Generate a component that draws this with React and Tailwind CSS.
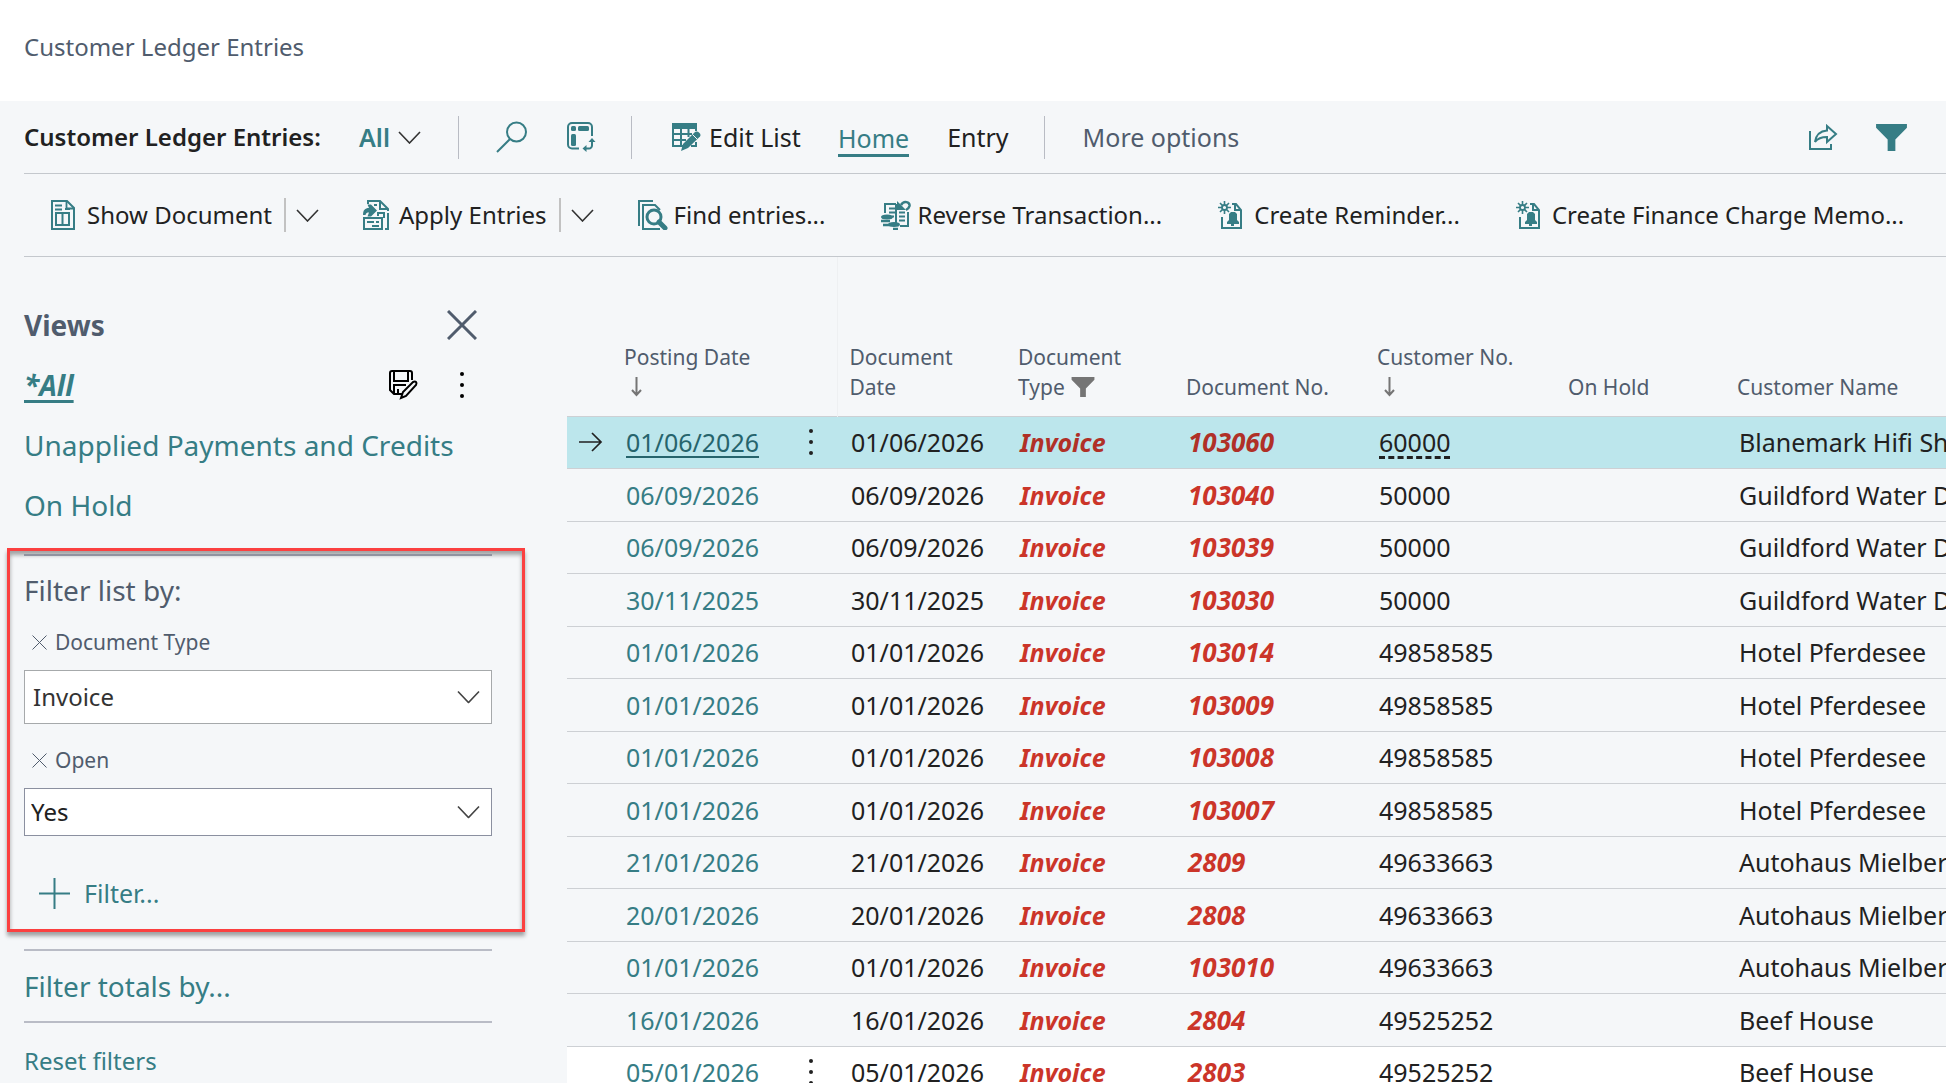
import React from "react";

function Svg({ w, h, vb, children, className = "" }) {
  return (
    <svg width={w} height={h} viewBox={vb || `0 0 ${w} ${h}`} fill="none" stroke="currentColor" strokeWidth="2" className={"shrink-0 " + className} aria-hidden="true">
      {children}
    </svg>
  );
}

const Chevron = ({ className = "" }) => (
  <Svg w={23} h={13} className={className}>
    <path d="M1 1l10.500 11L22 1" strokeWidth="1.600" />
  </Svg>
);

const SearchIcon = () => (
  <Svg w={32} h={32}>
    <circle cx="20.500" cy="11" r="9.500" />
    <path d="M14 18L1 31" />
  </Svg>
);

const AnalyzeIcon = () => (
  <Svg w={30} h={30}>
    <path d="M13 26.500H6a4 4 0 0 1-4-4V5a4 4 0 0 1 4-4h16a4 4 0 0 1 4 4v9" />
    <rect x="5" y="4" width="5" height="5" rx="1.500" fill="currentColor" stroke="none" />
    <rect x="12" y="4" width="11" height="5" rx="1.500" fill="currentColor" stroke="none" />
    <rect x="5" y="12" width="5" height="12" rx="1.500" fill="currentColor" stroke="none" />
    <path d="M26 18v5.500a3 3 0 0 1-3 3h-5" />
    <path d="M22.500 20l3.500-4 3.500 4zM20.500 23l-4 3.500 4 3.500z" fill="currentColor" stroke="none" />
  </Svg>
);

const EditListIcon = () => (
  <Svg w={29} h={28}>
    <path d="M1 1h23v4H1z" fill="currentColor" />
    <path d="M1 5v18h10M1 11h19M1 17h13M9 5v18M16.500 5v9M24 5v3M24 19v4h-5" />
    <path d="M9 28l2-7L23 9c2.500-2 7 2 5 4.500L16 25z" fill="currentColor" stroke="none" />
    <path d="M20.500 11.500l5 5" stroke="#f5f7f9" strokeWidth="1" />
  </Svg>
);

const ShareIcon = () => (
  <Svg w={30} h={27}>
    <path d="M2 7v18h21v-5" />
    <path d="M19 2l9 8-9 8v-5c-6 0-9 1-12 5 1-7 5-11 12-11.500z" />
  </Svg>
);

const Funnel = ({ w, h }) => (
  <Svg w={w} h={h} vb="0 0 32 28">
    <path d="M0 0h32v4L20 16v12h-8V16L0 4z" fill="currentColor" stroke="none" />
  </Svg>
);

const DocIcon = () => (
  <Svg w={25} h={30}>
    <path d="M1 1h15l7 7v21H1z" />
    <path d="M15.500 1v7.500H23M4 5.500h7M4 9.500h7M14 9h5" strokeWidth="1.800" />
    <path d="M5 13h13v12H5zM11.500 13v12" />
  </Svg>
);

const ApplyIcon = () => (
  <Svg w={27} h={30}>
    <path d="M5 4V1h12l8 8v2M17 1v8h8M11 5h3M25 13v16h-3" />
    <path d="M0 15c0-5 2-7 6-7L4.500 4.500H8l6 6-6 6H4.500L6 12.500c-2 0-3 .500-3.500 2.500z" fill="currentColor" stroke="none" />
    <path d="M15 16v-3h6v5M1 18h18v11H1zM4 22h7M13 22h3M9 26h7" />
  </Svg>
);

const FindIcon = () => (
  <Svg w={31} h={30}>
    <path d="M1 26V1h14" />
    <path d="M22 10l-5-5H5v24h17" />
    <circle cx="16" cy="17" r="7" strokeWidth="3" />
    <path d="M21 22l6 6" strokeWidth="5" strokeLinecap="round" />
  </Svg>
);

const ReverseIcon = () => (
  <Svg w={30} h={30}>
    <path d="M4 13V4h11M14 8.500H8M14 12.500H8M15 4v19M18 12.500h6M18 16.500h6M18 20.500h6M13 16.500h-2M27 12v14h-8" />
    <path d="M16 1v9h9z" fill="currentColor" stroke="none" />
    <path d="M20 5c3-5 9-3 8.500 1-.500 2-1.500 3-3.500 4" strokeWidth="2.500" />
    <ellipse cx="6" cy="17" rx="5" ry="1.500" fill="currentColor" />
    <path d="M0 21h9M2 25h6M12 29h5" strokeWidth="2.500" />
    <ellipse cx="13" cy="24.500" rx="5" ry="1.500" fill="currentColor" />
  </Svg>
);

const ReminderIcon = () => (
  <Svg w={25} h={29}>
    <path d="M6.500 0v13M0 6.500h13M2 2l9 9M11 2l-9 9" strokeWidth="1.600" />
    <circle cx="6.500" cy="6.500" r="2.500" fill="#f5f7f9" strokeWidth="1.800" />
    <path d="M14 3h4l5 6v18H4V16M17 3v6h6" />
    <path d="M13 11h4l2 2v6l2 2v2h-5v2h-3v-2H9v-2l2-2v-6z" fill="currentColor" stroke="none" />
  </Svg>
);

const SaveEditIcon = () => (
  <Svg w={30} h={30}>
    <path d="M13 24H5l-4-4V3q0-2 2-2h18q2 0 2 2v7" />
    <path d="M5 1v10h14V1M5 23v-8h12M9 24v-5" />
    <path d="M12 28l2-6 10-10q2-1 3 0t0 3L17 26z" />
  </Svg>
);

const Cross = ({ size, sw }) => (
  <Svg w={size} h={size} vb="0 0 30 30">
    <path d="M1 1l28 28M29 1L1 29" strokeWidth={sw} />
  </Svg>
);

const Dots = () => (
  <Svg w={6} h={28}>
    <g fill="currentColor" stroke="none">
      <circle cx="3" cy="3" r="2" />
      <circle cx="3" cy="14" r="2" />
      <circle cx="3" cy="25" r="2" />
    </g>
  </Svg>
);

const SortArrow = () => (
  <Svg w={13} h={20} className="text-[#757575]">
    <path d="M6.500 0v18M2 13l4.500 5 4.500-5" />
  </Svg>
);

const Divider = ({ className = "" }) => <span className={"w-px h-[43px] bg-[#b9bcc4] " + className} />;

function Action({ icon, label, split, className = "" }) {
  return (
    <div className={"flex items-center shrink-0 " + className}>
      <button className="flex items-center text-[#212121]">
        <span className="flex w-9 text-[#367d85]">{icon}</span>
        {label}
      </button>
      {split && (
        <>
          <span className="ml-3 h-[34px] w-0.5 bg-[#c2c2c2]" />
          <button aria-label={label + " options"} className="ml-2.5 text-[#333]">
            <Chevron />
          </button>
        </>
      )}
    </div>
  );
}

function FilterField({ id, label, options, className = "" }) {
  return (
    <div>
      <div className="flex h-9 items-center gap-2 pl-2 text-[21px] text-[#505c6d]">
        <button aria-label={"Remove " + label}>
          <Cross size={15} sw={2} />
        </button>
        <label htmlFor={id}>{label}</label>
      </div>
      <div className="relative mt-2.5">
        <select id={id} className={"block w-full appearance-none rounded-none border bg-white text-[24px] " + className}>
          {options.map((o) => (
            <option key={o}>{o}</option>
          ))}
        </select>
        <Chevron className="pointer-events-none absolute right-3 top-1/2 -translate-y-1/2 text-[#444]" />
      </div>
    </div>
  );
}

const rows = [
  ["01/06/2026", "103060", "60000", "Blanemark Hifi Shop"],
  ["06/09/2026", "103040", "50000", "Guildford Water Department"],
  ["06/09/2026", "103039", "50000", "Guildford Water Department"],
  ["30/11/2025", "103030", "50000", "Guildford Water Department"],
  ["01/01/2026", "103014", "49858585", "Hotel Pferdesee"],
  ["01/01/2026", "103009", "49858585", "Hotel Pferdesee"],
  ["01/01/2026", "103008", "49858585", "Hotel Pferdesee"],
  ["01/01/2026", "103007", "49858585", "Hotel Pferdesee"],
  ["21/01/2026", "2809", "49633663", "Autohaus Mielberg KG"],
  ["20/01/2026", "2808", "49633663", "Autohaus Mielberg KG"],
  ["01/01/2026", "103010", "49633663", "Autohaus Mielberg KG"],
  ["16/01/2026", "2804", "49525252", "Beef House"],
  ["05/01/2026", "2803", "49525252", "Beef House"],
];

function LedgerTable() {
  const th = "p-0 pb-3.5 pl-3 text-left align-bottom font-normal leading-[30px]";
  return (
    <table className="w-full table-fixed border-collapse whitespace-nowrap">
      <colgroup>
        <col className="w-[45px]" />
        <col className="w-[171px]" />
        <col className="w-[54px]" />
        <col className="w-[169px]" />
        <col className="w-[168px]" />
        <col className="w-[191px]" />
        <col className="w-[191px]" />
        <col className="w-[169px]" />
        <col />
      </colgroup>
      <thead>
        <tr className="h-[159px] border-b border-[#cdd0d4] text-[21px] text-[#505c6d]">
          <th className="p-0" aria-label="Selected" />
          <th className={th}>Posting Date<span className="flex h-[30px] items-center pl-1.5"><SortArrow /></span></th>
          <th className="border-r border-[#eef0f2] p-0" aria-label="Row menu" />
          <th className={th}>Document<br />Date</th>
          <th className={th}>Document<span className="flex items-center gap-1.5">Type <span className="text-[#757575]"><Funnel w={24} h={20} /></span></span></th>
          <th className={th}>Document No.</th>
          <th className={th}>Customer No.<span className="flex h-[30px] items-center pl-1.5"><SortArrow /></span></th>
          <th className={th}>On Hold</th>
          <th className={th}>Customer Name</th>
        </tr>
      </thead>
      <tbody>
        {rows.map(([date, doc, cust, name], i) => {
          const sel = i === 0;
          const last = i === rows.length - 1;
          return (
            <tr key={doc} className={"h-[52px] even:h-[53px] border-b border-[#cdd0d4] text-[25px] text-[#212121] " + (sel ? "bg-[#bce6ec]" : last ? "bg-white" : "")}>
              <td className="p-0 pl-3">
                {sel && (
                  <Svg w={24} h={20} className="text-[#212121]">
                    <path d="M0 10h22M13 1l9 9-9 9" strokeWidth="1.700" />
                  </Svg>
                )}
              </td>
              <td className="p-0 pl-3.5">
                <a href="#entry" className={sel ? "text-[#26646c] underline decoration-2 underline-offset-4" : "text-[#367d85]"}>{date}</a>
              </td>
              <td className="p-0">
                {(sel || last) && (
                  <button aria-label="More options for row" className="ml-[25px] flex"><Dots /></button>
                )}
              </td>
              <td className="p-0 pl-3.5">{date}</td>
              <td className={"p-0 pl-3.5 font-bold italic " + (sel ? "text-[#b03027]" : "text-[#cb3529]")}>Invoice</td>
              <td className={"p-0 pl-3.5 text-[26px] font-bold italic " + (sel ? "text-[#b03027]" : "text-[#cb3529]")}>{doc}</td>
              <td className="p-0 pl-3.5">
                <span className={sel ? "underline decoration-dashed decoration-[3px] underline-offset-4" : ""}>{cust}</span>
              </td>
              <td className="p-0" />
              <td className="overflow-hidden p-0 pl-3.5">{name}</td>
            </tr>
          );
        })}
      </tbody>
    </table>
  );
}

export default function App() {
  return (
    <div className="flex h-screen flex-col overflow-hidden bg-[#f5f7f9] font-['Noto_Sans',sans-serif] text-[25px] leading-9 text-[#212121]">
      <header className="flex h-[101px] shrink-0 items-center bg-white pb-2 pl-6 text-[24px] text-[#505c6d]">
        <h1>Customer Ledger Entries</h1>
      </header>

      <nav className="ml-6 flex h-[73px] shrink-0 items-center whitespace-nowrap border-b border-[#c4c8cd]">
        <h2 className="w-[335px] text-[24px] font-semibold">Customer Ledger Entries:</h2>
        <button className="flex w-[99px] items-center gap-2 font-semibold text-[#367d85]">
          All <Chevron className="text-[#333]" />
        </button>
        <Divider />
        <button aria-label="Search" className="ml-[37px] text-[#367d85]"><SearchIcon /></button>
        <button aria-label="Analyze" className="ml-[38px] text-[#367d85]"><AnalyzeIcon /></button>
        <Divider className="ml-[35px]" />
        <button className="ml-10 flex w-[166px] items-center gap-2">
          <span className="text-[#367d85]"><EditListIcon /></span>Edit List
        </button>
        <button className="mt-1 border-b-[3px] border-[#367d85] leading-8 text-[#367d85]">Home</button>
        <button className="ml-[38px]">Entry</button>
        <Divider className="ml-[35px]" />
        <button className="ml-[38px] text-[#505c6d]">More options</button>
        <button aria-label="Share" className="ml-auto text-[#367d85]"><ShareIcon /></button>
        <button aria-label="Filter pane" className="ml-[38px] mr-[39px] text-[#367d85]"><Funnel w={31} h={27} /></button>
      </nav>

      <div className="ml-6 flex h-[83px] shrink-0 items-center whitespace-nowrap border-b border-[#c4c8cd] pl-[27px] text-[24px]">
        <Action icon={<DocIcon />} label="Show Document" split />
        <Action icon={<ApplyIcon />} label="Apply Entries" split className="ml-11" />
        <Action icon={<FindIcon />} label="Find entries..." className="ml-11" />
        <Action icon={<ReverseIcon />} label="Reverse Transaction..." className="ml-14" />
        <Action icon={<ReminderIcon />} label="Create Reminder..." className="ml-14" />
        <Action icon={<ReminderIcon />} label="Create Finance Charge Memo..." className="ml-14" />
      </div>

      <div className="flex min-h-0 flex-1">
        <aside className="flex w-[567px] shrink-0 flex-col pl-6 pr-[75px] text-[28px] text-[#367d85]">
          <div className="mt-[38px] flex h-[60px] items-center justify-between text-[#505c6d]">
            <h2 className="font-bold">Views</h2>
            <button aria-label="Close" className="mr-[15px]"><Cross size={30} sw={3} /></button>
          </div>
          <div className="flex h-[60px] items-center">
            <a href="#all" className="font-bold italic underline decoration-[3px] underline-offset-4">*All</a>
            <button aria-label="Save view" className="ml-auto text-black"><SaveEditIcon /></button>
            <button aria-label="View options" className="ml-10 mr-[27px] text-black"><Dots /></button>
          </div>
          <a href="#unapplied" className="h-[60px] leading-[60px] whitespace-nowrap">Unapplied Payments and Credits</a>
          <a href="#onhold" className="h-[60px] leading-[60px]">On Hold</a>

          <section className="-ml-[17px] -mr-[33px] mt-[13px] h-[384px] border-[3px] border-[#fb4040] pl-3.5 pr-[30px] shadow-[0_4px_4px_rgba(0,0,0,0.35),inset_0_4px_4px_rgba(0,0,0,0.35)]">
            <hr className="mt-[3px] h-0.5 border-0 bg-[#9093a0]" />
            <h3 className="mt-4 text-[#505c6d]">Filter list by:</h3>
            <div className="mt-4"><FilterField id="doctype" label="Document Type" options={["Invoice", "Payment"]} className="h-[54px] border-[#a6a9ab] pl-2 text-[#333]" /></div>
            <div className="mt-[18px]"><FilterField id="open" label="Open" options={["Yes", "No"]} className="h-12 border-[#8b90a0] pl-1.5 text-[#212121]" /></div>
            <button className="ml-[15px] mt-[39px] flex items-center gap-3.5 text-[25px]">
              <Svg w={31} h={31}><path d="M15.500 0v31M0 15.500h31" /></Svg>
              Filter...
            </button>
          </section>

          <hr className="mt-[17px] h-0.5 shrink-0 border-0 bg-[#b9bcc6]" />
          <a href="#totals" className="h-[70px] shrink-0 leading-[70px]">Filter totals by...</a>
          <hr className="h-0.5 shrink-0 border-0 bg-[#b9bcc6]" />
          <a href="#reset" className="mt-5 text-[24px]">Reset filters</a>
        </aside>
        <main className="min-w-0 flex-1 overflow-hidden">
          <LedgerTable />
        </main>
      </div>
    </div>
  );
}
